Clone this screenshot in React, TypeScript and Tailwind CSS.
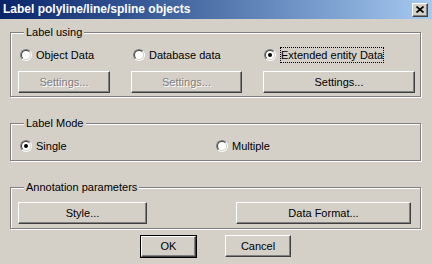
import React from "react";

const Radio = ({ checked = false }: { checked?: boolean }) => (
  <span className="w-[12px] h-[12px] shrink-0 rounded-full border border-t-[#808080] border-l-[#808080] border-b-white border-r-white flex">
    <span className="flex-1 rounded-full border border-t-[#404040] border-l-[#404040] border-b-[#d4d0c8] border-r-[#d4d0c8] bg-white flex items-center justify-center">
      {checked && <span className="w-[4px] h-[4px] rounded-full bg-black" />}
    </span>
  </span>
);

const Btn = ({
  label,
  w,
  disabled = false,
  isDefault = false,
}: {
  label: string;
  w: string;
  disabled?: boolean;
  isDefault?: boolean;
}) => {
  const face = (
    <span className="flex-1 flex items-center justify-center border border-t-white border-l-white border-b-[#404040] border-r-[#404040] shadow-[inset_-1px_-1px_0_#808080]">
      <span
        className={
          disabled
            ? "text-[#808080] [text-shadow:1px_1px_0_#ffffff]"
            : "text-black"
        }
      >
        {label}
      </span>
    </span>
  );
  if (isDefault) {
    return (
      <div className={`${w} h-[23px] flex border border-black`}>{face}</div>
    );
  }
  return <div className={`${w} h-[22px] flex`}>{face}</div>;
};

const Group = ({
  title,
  className,
  children,
}: {
  title: string;
  className: string;
  children: React.ReactNode;
}) => (
  <fieldset
    className={`min-w-0 m-0 border border-[#808080] shadow-[inset_1px_1px_0_#ffffff,1px_1px_0_#ffffff] pl-[7px] pr-[6px] ${className}`}
  >
    <legend className="ml-[6px] px-[2px] leading-[13px] bg-[#d4d0c8]">
      {title}
    </legend>
    {children}
  </fieldset>
);

export default function App() {
  return (
    <div className="w-[432px] h-[264px] bg-[#d4d0c8] flex flex-col text-[11px] leading-[13px] text-black font-['Liberation_Sans',Arial,sans-serif] overflow-hidden">
      <div className="h-[19px] shrink-0 flex items-center justify-between pl-[3px] pr-[4px] bg-linear-to-r from-[#0a246a] to-[#a6caf0]">
        <span className="text-white font-bold text-[12px]">
          Label polyline/line/spline objects
        </span>
        <div className="w-[16px] h-[14px] flex">
          <span className="flex-1 flex items-center justify-center border border-t-white border-l-white border-b-[#404040] border-r-[#404040] shadow-[inset_-1px_-1px_0_#808080] bg-[#d4d0c8]">
            <svg width="8" height="7" viewBox="0 0 8 7">
              <path
                d="M0.5 0.5 L7.5 6.5 M7.5 0.5 L0.5 6.5"
                stroke="black"
                strokeWidth="1.7"
              />
            </svg>
          </span>
        </div>
      </div>

      <div className="flex flex-col pl-[10px] pr-[11px]">
        <Group title="Label using" className="mt-[7px] pt-[9px] pb-[3px]">
          <div className="grid grid-cols-[92px_111px_152px] gap-x-[21px]">
            <div className="h-[14px] flex items-center gap-[4px] ml-[2px]">
              <Radio />
              <span>Object Data</span>
            </div>
            <div className="h-[14px] flex items-center gap-[4px] ml-[2px]">
              <Radio />
              <span>Database data</span>
            </div>
            <div className="h-[14px] flex items-center gap-[4px] ml-[1px]">
              <Radio checked />
              <span className="border border-dotted border-black leading-[14px]">
                Extended entity Data
              </span>
            </div>
            <div className="mt-[9px]">
              <Btn label="Settings..." w="w-[92px]" disabled />
            </div>
            <div className="mt-[9px]">
              <Btn label="Settings..." w="w-[111px]" disabled />
            </div>
            <div className="mt-[9px]">
              <Btn label="Settings..." w="w-[152px]" />
            </div>
          </div>
        </Group>

        <Group title="Label Mode" className="mt-[20px] pt-[9px] pb-[7px]">
          <div className="flex h-[14px]">
            <div className="w-[196px] flex items-center gap-[4px] pl-[2px]">
              <Radio checked />
              <span>Single</span>
            </div>
            <div className="flex items-center gap-[4px] pl-[2px]">
              <Radio />
              <span>Multiple</span>
            </div>
          </div>
        </Group>

        <Group
          title="Annotation parameters"
          className="mt-[20px] pt-[8px] pb-[4px]"
        >
          <div className="flex justify-between pr-[3px]">
            <Btn label="Style..." w="w-[129px]" />
            <Btn label="Data Format..." w="w-[175px]" />
          </div>
        </Group>

        <div className="flex justify-center gap-[28px] mt-[6px]">
          <Btn label="OK" w="w-[57px]" isDefault />
          <Btn label="Cancel" w="w-[66px]" />
        </div>
      </div>
    </div>
  );
}
